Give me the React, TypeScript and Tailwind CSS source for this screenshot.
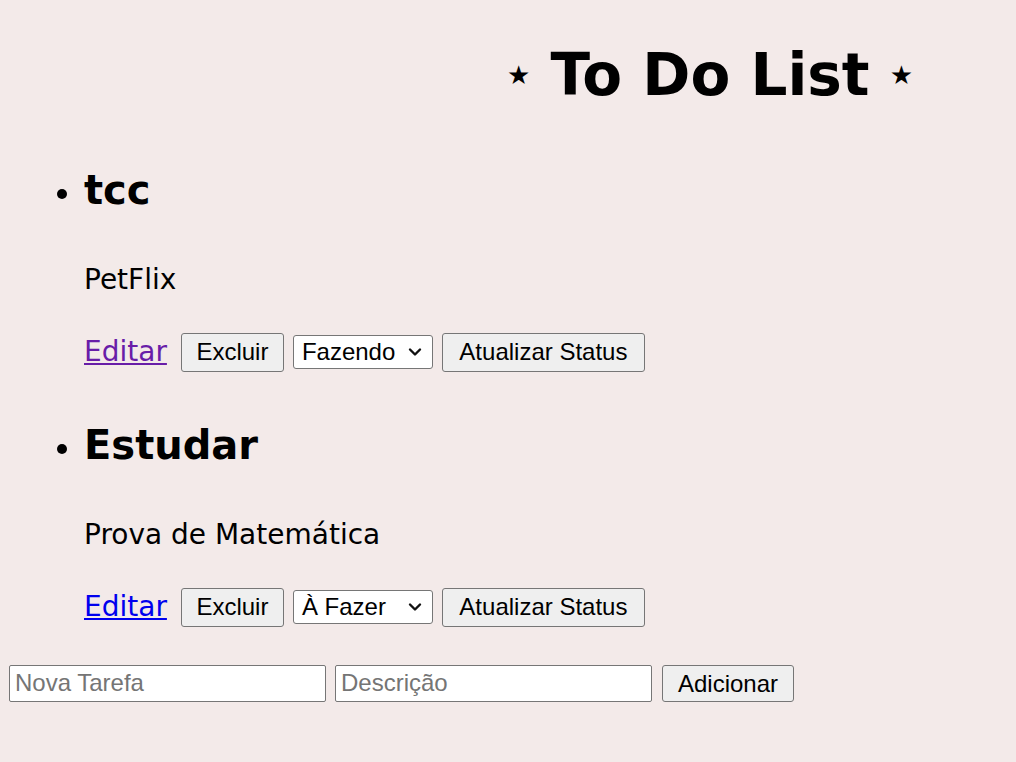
import React from "react";

const comic = "font-['Comic_Sans_MS','DejaVu_Sans',sans-serif]";
const arial = "font-['Liberation_Sans',Arial,sans-serif]";

function Chevron() {
  return (
    <svg width="14" height="10" viewBox="0 0 14 10" className="shrink-0">
      <path d="M2 2.5 L7 7.5 L12 2.5" fill="none" stroke="#111" strokeWidth="2.4" strokeLinecap="round" strokeLinejoin="round" />
    </svg>
  );
}

function Btn({ children, w }: { children: React.ReactNode; w: string }) {
  return (
    <button className={`${arial} ${w} h-[39px] text-[24px] text-black bg-[#efefef] border border-[#767676] rounded-[3px] flex items-center justify-center`}>
      {children}
    </button>
  );
}

function Task({ title, desc, status, linkColor }: { title: string; desc: string; status: string; linkColor: string }) {
  return (
    <li className="marker:text-[28px]">
      <h2 className={`${comic} font-bold text-[40px] leading-[52px] text-black`}>{title}</h2>
      <p className={`${comic} text-[28px] leading-[32px] mt-[48px] text-black`}>{desc}</p>
      <div className="flex items-center gap-[9px] mt-[37px]">
        <a href="#" className={`${comic} text-[28px] leading-[34px] underline ${linkColor} mr-[5px]`}>Editar</a>
        <Btn w="w-[103px]">Excluir</Btn>
        <div className={`${arial} w-[140px] h-[34px] bg-white border border-[#767676] rounded-[3px] flex items-center pl-[8px] pr-[10px] text-[24px] text-black`}>
          <span className="flex-1 whitespace-pre">{status}</span>
          <Chevron />
        </div>
        <Btn w="w-[203px]">Atualizar Status</Btn>
      </div>
    </li>
  );
}

export default function App() {
  return (
    <div className="min-h-[762px] w-full bg-[#f3eae9] text-black">
      <div className="pt-[40px]">
        <h1 className={`${comic} font-bold text-[58px] leading-[70px] pl-[404px] text-center`}>
          <span className="text-[26px] align-middle relative top-[-4px]">★</span> To Do List <span className="text-[26px] align-middle relative top-[-4px]">★</span>
        </h1>
      </div>
      <ul className="list-disc pl-[84px] mt-[50px] flex flex-col gap-[47px]">
        <Task title="tcc" desc="PetFlix" status="Fazendo" linkColor="text-[#681da8]" />
        <Task title="Estudar" desc="Prova de Matemática" status="À Fazer" linkColor="text-[#0000ee]" />
      </ul>
      <div className="flex items-center gap-[9px] pl-[9px] mt-[38px]">
        <input
          placeholder="Nova Tarefa"
          className={`${arial} w-[317px] h-[37px] bg-white border border-[#767676] rounded-[2px] px-[5px] text-[24px] placeholder:text-[#757575] outline-none`}
        />
        <input
          placeholder="Descrição"
          className={`${arial} w-[317px] h-[37px] bg-white border border-[#767676] rounded-[2px] px-[5px] text-[24px] placeholder:text-[#757575] outline-none`}
        />
        <button className={`${arial} w-[132px] h-[37px] text-[24px] bg-[#efefef] border border-[#767676] rounded-[3px] ml-[1px]`}>Adicionar</button>
      </div>
    </div>
  );
}
